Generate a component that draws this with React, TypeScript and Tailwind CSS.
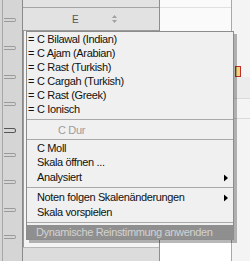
const font = { fontFamily: '"Liberation Sans", Arial, sans-serif' };

type Item =
  | { kind: "item"; label: string; mark?: boolean; sub?: boolean; tall?: boolean }
  | { kind: "sep"; h: string }
  | { kind: "header"; label: string }
  | { kind: "active"; label: string };

const items: Item[] = [
  { kind: "item", label: "C Bilawal (Indian)", mark: true },
  { kind: "item", label: "C Ajam (Arabian)", mark: true },
  { kind: "item", label: "C Rast (Turkish)", mark: true },
  { kind: "item", label: "C Cargah (Turkish)", mark: true },
  { kind: "item", label: "C Rast (Greek)", mark: true },
  { kind: "item", label: "C Ionisch", mark: true },
  { kind: "sep", h: "h-[7px]" },
  { kind: "header", label: "C Dur" },
  { kind: "sep", h: "h-[4px]" },
  { kind: "item", label: "C Moll" },
  { kind: "item", label: "Skala öffnen ...", tall: true },
  { kind: "item", label: "Analysiert", sub: true, tall: true },
  { kind: "sep", h: "h-[5px]" },
  { kind: "item", label: "Noten folgen Skalenänderungen", sub: true, tall: true },
  { kind: "item", label: "Skala vorspielen" },
  { kind: "sep", h: "h-[6px]" },
  { kind: "active", label: "Dynamische Reinstimmung anwenden" },
];

// the little piano-key marks in the left gutter
const keys = [20, 48, 77, 104, 130, 155, 182, 210, 237];

function Arrow() {
  return (
    <svg width="4" height="7" viewBox="0 0 4 7" className="absolute right-[5px] top-1/2 -translate-y-1/2">
      <path d="M0 0 L4 3.5 L0 7 Z" fill="#000" />
    </svg>
  );
}

function ContextMenu() {
  return (
    <div className="absolute left-[26px] top-[31px] w-[208px] border border-[#8c8c8c] bg-[#f0f0f0] text-[11px] leading-none tracking-[-0.35px] shadow-[3px_3px_0_rgba(0,0,0,0.28)]">
      {items.map((it, i) => {
        if (it.kind === "sep") {
          return (
            <div key={i} className={`${it.h} flex items-center`}>
              <div className="h-px w-full bg-[#a9a9a9]" />
            </div>
          );
        }
        if (it.kind === "header") {
          return (
            <div key={i} className="flex h-[14px] items-center pl-[31px] text-[#9c9c9c]">
              {it.label}
            </div>
          );
        }
        if (it.kind === "active") {
          return (
            <div key={i} className="flex h-[14px] items-center bg-[#8f8f8f] pl-[9px] text-[#d2d2d2]">
              {it.label}
            </div>
          );
        }
        return (
          <div
            key={i}
            className={`relative flex ${it.tall ? "h-[15px]" : "h-[14px]"} items-center text-[#111]`}
          >
            <span className="w-[10px] shrink-0 pl-px">{it.mark ? "=" : ""}</span>
            <span>{it.label}</span>
            {it.sub && <Arrow />}
          </div>
        );
      })}
    </div>
  );
}

export default function App() {
  return (
    <div className="relative h-[261px] w-[250px] overflow-hidden bg-white" style={font}>
      <div className="flex h-full">
        {/* gutter with keys */}
        <div className="relative h-full w-[23px] border-r border-[#8a8a8a] bg-[#d5d5d5]">
          <div className="absolute left-[2px] top-0 h-full w-px bg-[#a8a8a8]" />
          {keys.map((y, i) => (
            <div
              key={i}
              className={`absolute left-[4px] w-[12px] rounded-r-full border border-l-0 ${
                i === 4 ? "h-[5px] border-[#555]" : "h-[4px] border-[#9a9a9a]"
              }`}
              style={{ top: y - 2 }}
            />
          ))}
        </div>

        {/* column E */}
        <div className="flex w-[137px] flex-col border-r border-[#8e8e8e]">
          <div className="h-[8px] border-b border-[#a4a4a4] bg-[#e2e2e2]" />
          <div className="flex h-[23px] items-center border-b border-[#9a9a9a] bg-[#e2e2e2]">
            <span className="ml-[49px] text-[10px] text-[#555]">E</span>
            <svg width="5" height="8" viewBox="0 0 5 8" className="ml-[33px]">
              <path d="M2.5 0 L5 3 H0 Z M2.5 8 L5 5 H0 Z" fill="#a0a0a0" />
            </svg>
          </div>
          <div className="flex-1 border-l border-[#9a9a9a] bg-[#f4f4f4]" />
          <div className="h-[14px] border-t border-[#b8b8b8] bg-[#dcdcdc]" />
        </div>

        {/* next column */}
        <div className="flex w-[72px] flex-col border-r border-[#a8a8a8]">
          <div className="h-[8px] border-b border-[#e0e0e0] bg-[#fafafa]" />
          <div className="h-[23px] bg-[#fafafa]" />
          <div className="flex-1 bg-white" />
        </div>

        {/* right strip */}
        <div className="flex flex-1 flex-col bg-[#f4f4f4]">
          <div className="h-[66px]" />
          <div className="ml-[3px] h-[11px] w-[6px] border border-[#c0302a] bg-[#f2d27a]" />
          <div className="h-[22px] border-b border-[#dadada] bg-[#ececec]" />
          <div className="h-[20px] border-b border-[#dadada]" />
          <div className="flex-1" />
        </div>
      </div>

      <ContextMenu />
    </div>
  );
}
